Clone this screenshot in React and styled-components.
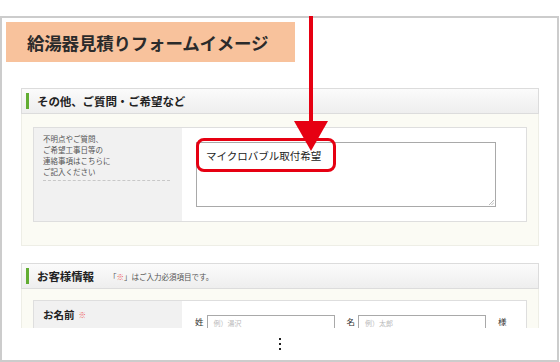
import styled, { createGlobalStyle } from "styled-components";

const Global = createGlobalStyle`
  html, body {
    margin: 0;
    padding: 0;
    background: #ffffff;
  }
  body {
    width: 560px;
    height: 362px;
    overflow: hidden;
    font-family: "Noto Sans CJK JP", "Noto Sans", sans-serif;
    color: #333;
  }
`;

const Stage = styled.div`
  position: relative;
  width: 560px;
  height: 362px;
`;

const Frame = styled.div`
  margin-top: 16px;
  width: 559px;
  height: 346px;
  box-sizing: border-box;
  border: 2px solid #cccccc;
  display: flex;
  flex-direction: column;
`;

const Viewport = styled.div`
  height: 310px;
  overflow: hidden;
`;

const Title = styled.div`
  margin: 4px 0 0 4px;
  width: 289px;
  height: 40px;
  box-sizing: border-box;
  padding-left: 21px;
  background: #f8c29c;
  display: flex;
  align-items: center;
  font-size: 17.5px;
  font-weight: 700;
  color: #2b2b2b;
  letter-spacing: -0.2px;
`;

const Content = styled.div`
  padding: 0 18px 0 19px;
`;

const Section = styled.section`
  margin-top: ${(p) => p.$top}px;
`;

const SectionHead = styled.div`
  height: 26px;
  box-sizing: border-box;
  border: 1px solid #dcdcdc;
  background: linear-gradient(#fbfbfb, #eeeeee);
  display: flex;
  align-items: center;
  padding-left: 4px;
`;

const GreenBar = styled.span`
  width: 3px;
  height: 16px;
  background: #62ad33;
  margin-right: 8px;
`;

const HeadTitle = styled.h2`
  margin: 0;
  font-size: 11.5px;
  font-weight: 700;
  color: #222;
  letter-spacing: -0.1px;
`;

const Note = styled.span`
  margin-left: 15px;
  font-size: 7.5px;
  color: #555;
`;

const Mark = styled.span`
  color: #ee5a5a;
`;

const SectionBody = styled.div`
  background: #fbfbf4;
  border: 1px solid #eeeee6;
  border-top: none;
  padding: ${(p) => p.$pad};
`;

const Table = styled.div`
  display: grid;
  grid-template-columns: 148px 1fr;
  border: 1px solid #dedede;
  background: #fff;
`;

const HeadCell = styled.div`
  background: #f1f1f1;
  padding: ${(p) => p.$pad};
`;

const Hint = styled.p`
  margin: 0;
  font-size: 7.5px;
  line-height: 11px;
  color: #555;
`;

const Dashed = styled.div`
  margin-top: 3px;
  width: 127px;
  border-top: 1px dashed #c8c8c8;
`;

const Label = styled.div`
  font-size: 10.5px;
  font-weight: 700;
  line-height: 14px;
  color: #222;
  display: flex;
  align-items: center;
  gap: 4px;
`;

const Req = styled.span`
  font-size: 7.5px;
  color: #ee5a5a;
`;

const BodyCell = styled.div`
  padding: ${(p) => p.$pad};
`;

const TextArea = styled.div`
  position: relative;
  height: 65px;
  box-sizing: border-box;
  border: 1px solid #a9a9a9;
  background: #fff;
`;

const Highlight = styled.div`
  position: absolute;
  left: -1px;
  top: -5px;
  width: 140px;
  height: 34px;
  box-sizing: border-box;
  border: 3px solid #e60012;
  border-radius: 8px;
  display: flex;
  align-items: center;
  padding-left: 7px;
  font-size: 10.5px;
  color: #222;
  white-space: nowrap;
`;

const Grip = styled.svg`
  position: absolute;
  right: 1px;
  bottom: 1px;
`;

const NameRow = styled.div`
  display: flex;
  align-items: flex-start;
`;

const NameLabel = styled.span`
  font-size: 8.5px;
  line-height: 10px;
  color: #333;
  margin: 1px 3px 0 0;
  margin-left: ${(p) => p.$gap}px;
`;

const Input = styled.div`
  width: 128px;
  height: 22px;
  box-sizing: border-box;
  border: 1px solid #a9a9a9;
  padding: 3px 0 0 6px;
  font-size: 7px;
  line-height: 9px;
  color: #bbb;
`;

const Footer = styled.div`
  flex: 1;
  display: flex;
  justify-content: center;
  align-items: center;
`;

const Kebab = styled.div`
  display: flex;
  flex-direction: column;
  gap: 3px;
  span {
    width: 2px;
    height: 2px;
    background: #222;
  }
`;

const Arrow = styled.svg`
  position: absolute;
  left: 294px;
  top: 0;
`;

export default function App() {
  return (
    <Stage>
      <Global />
      <Frame>
        <Viewport>
          <Title>給湯器見積りフォームイメージ</Title>
          <Content>
            <Section $top={26}>
              <SectionHead>
                <GreenBar />
                <HeadTitle>その他、ご質問・ご希望など</HeadTitle>
              </SectionHead>
              <SectionBody $pad="13px 11px 23px 11px">
                <Table>
                  <HeadCell $pad="5px 9px">
                    <Hint>
                      不明点やご質問、
                      <br />
                      ご希望工事日等の
                      <br />
                      連絡事項はこちらに
                      <br />
                      ご記入ください
                    </Hint>
                    <Dashed />
                  </HeadCell>
                  <BodyCell $pad="14px 30px 14px 14px">
                    <TextArea>
                      <Highlight>マイクロバブル取付希望</Highlight>
                      <Grip width="6" height="6" viewBox="0 0 6 6">
                        <path d="M1 6L6 1M3.5 6L6 3.5" stroke="#aaa" strokeWidth="0.8" />
                      </Grip>
                    </TextArea>
                  </BodyCell>
                </Table>
              </SectionBody>
            </Section>
            <Section $top={17}>
              <SectionHead>
                <GreenBar />
                <HeadTitle>お客様情報</HeadTitle>
                <Note>
                  「<Mark>※</Mark>」はご入力必須項目です。
                </Note>
              </SectionHead>
              <SectionBody $pad="11px 11px 20px 11px">
                <Table>
                  <HeadCell $pad="7px 9px 30px">
                    <Label>
                      お名前<Req>※</Req>
                    </Label>
                  </HeadCell>
                  <BodyCell $pad="14px 14px 14px 13px">
                    <NameRow>
                      <NameLabel $gap={0}>姓</NameLabel>
                      <Input>例）湯沢</Input>
                      <NameLabel $gap={12}>名</NameLabel>
                      <Input>例）太郎</Input>
                      <NameLabel $gap={12}>様</NameLabel>
                    </NameRow>
                  </BodyCell>
                </Table>
              </SectionBody>
            </Section>
          </Content>
        </Viewport>
        <Footer>
          <Kebab>
            <span />
            <span />
            <span />
          </Kebab>
        </Footer>
      </Frame>
      <Arrow width="34" height="136" viewBox="0 0 34 136">
        <rect x="15" y="0" width="4" height="108" fill="#e60012" />
        <polygon points="0,105 34,105 17,135" fill="#e60012" />
      </Arrow>
    </Stage>
  );
}
